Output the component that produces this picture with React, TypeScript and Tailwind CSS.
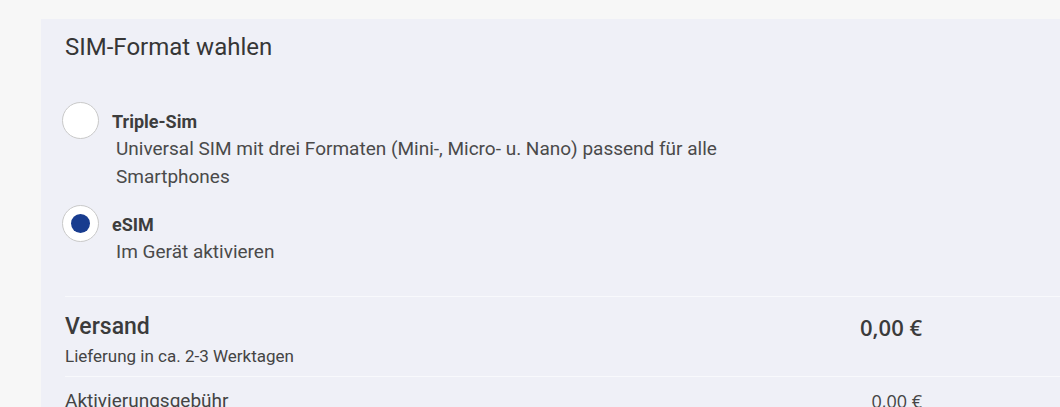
import { useState } from 'react';

type SimOption = { id: string; label: string; description: string };

const options: SimOption[] = [
  {
    id: 'triple',
    label: 'Triple-Sim',
    description: 'Universal SIM mit drei Formaten (Mini-, Micro- u. Nano) passend für alle Smartphones',
  },
  { id: 'esim', label: 'eSIM', description: 'Im Gerät aktivieren' },
];

function Radio({ checked }: { checked: boolean }) {
  return (
    <span className="flex h-[37px] w-[37px] shrink-0 items-center justify-center rounded-full border border-[#c9c9c9] bg-white">
      {checked && <span className="h-[19px] w-[19px] rounded-full bg-[#183c8f]" />}
    </span>
  );
}

export default function App() {
  const [selected, setSelected] = useState('esim');

  return (
    <div className="h-[407px] overflow-hidden bg-[#f7f7f7] pl-[41px] pt-[19px] font-['Roboto',sans-serif] text-[#3d3d3d]">
      <div className="h-full bg-[#eff0f7] pl-6 pt-3">
        <h2 className="text-[24px] leading-[32px] font-normal text-[#363636]">SIM-Format wahlen</h2>

        <div className="mt-[39px] -ml-[3px] flex flex-col gap-[14px]">
          {options.map((o) => (
            <button
              key={o.id}
              type="button"
              onClick={() => setSelected(o.id)}
              className="flex items-start gap-[13px] text-left"
            >
              <Radio checked={selected === o.id} />
              <span className="flex flex-col pt-[7px]">
                <span className="text-[18px] leading-[26px] font-bold text-[#3d3d3d]">{o.label}</span>
                <span className="ml-1 max-w-[640px] text-[19px] leading-[28px] text-[#4a4a4a]">{o.description}</span>
              </span>
            </button>
          ))}
        </div>

        <div className="mt-[30px] border-t border-[#f8f9fc]">
          <div className="flex items-start justify-between pt-[15px] pb-[9px]">
            <div>
              <div className="text-[23px] leading-[30px] font-medium text-[#3b3b3b]">Versand</div>
              <div className="mt-[3px] text-[17px] leading-[22px] text-[#444]">Lieferung in ca. 2-3 Werktagen</div>
            </div>
            <div className="pr-[138px] font-['Open_Sans',sans-serif] text-[22px] leading-[30px] font-semibold text-[#3b3b3b]">
              0,00 €
            </div>
          </div>
        </div>

        <div className="border-t border-[#f8f9fc]">
          <div className="flex items-start justify-between pt-[10px]">
            <div className="text-[19px] leading-[28px] text-[#444]">Aktivierungsgebühr</div>
            <div className="pr-[138px] font-['Open_Sans',sans-serif] text-[18px] leading-[28px] text-[#444]">0,00 €</div>
          </div>
        </div>
      </div>
    </div>
  );
}
